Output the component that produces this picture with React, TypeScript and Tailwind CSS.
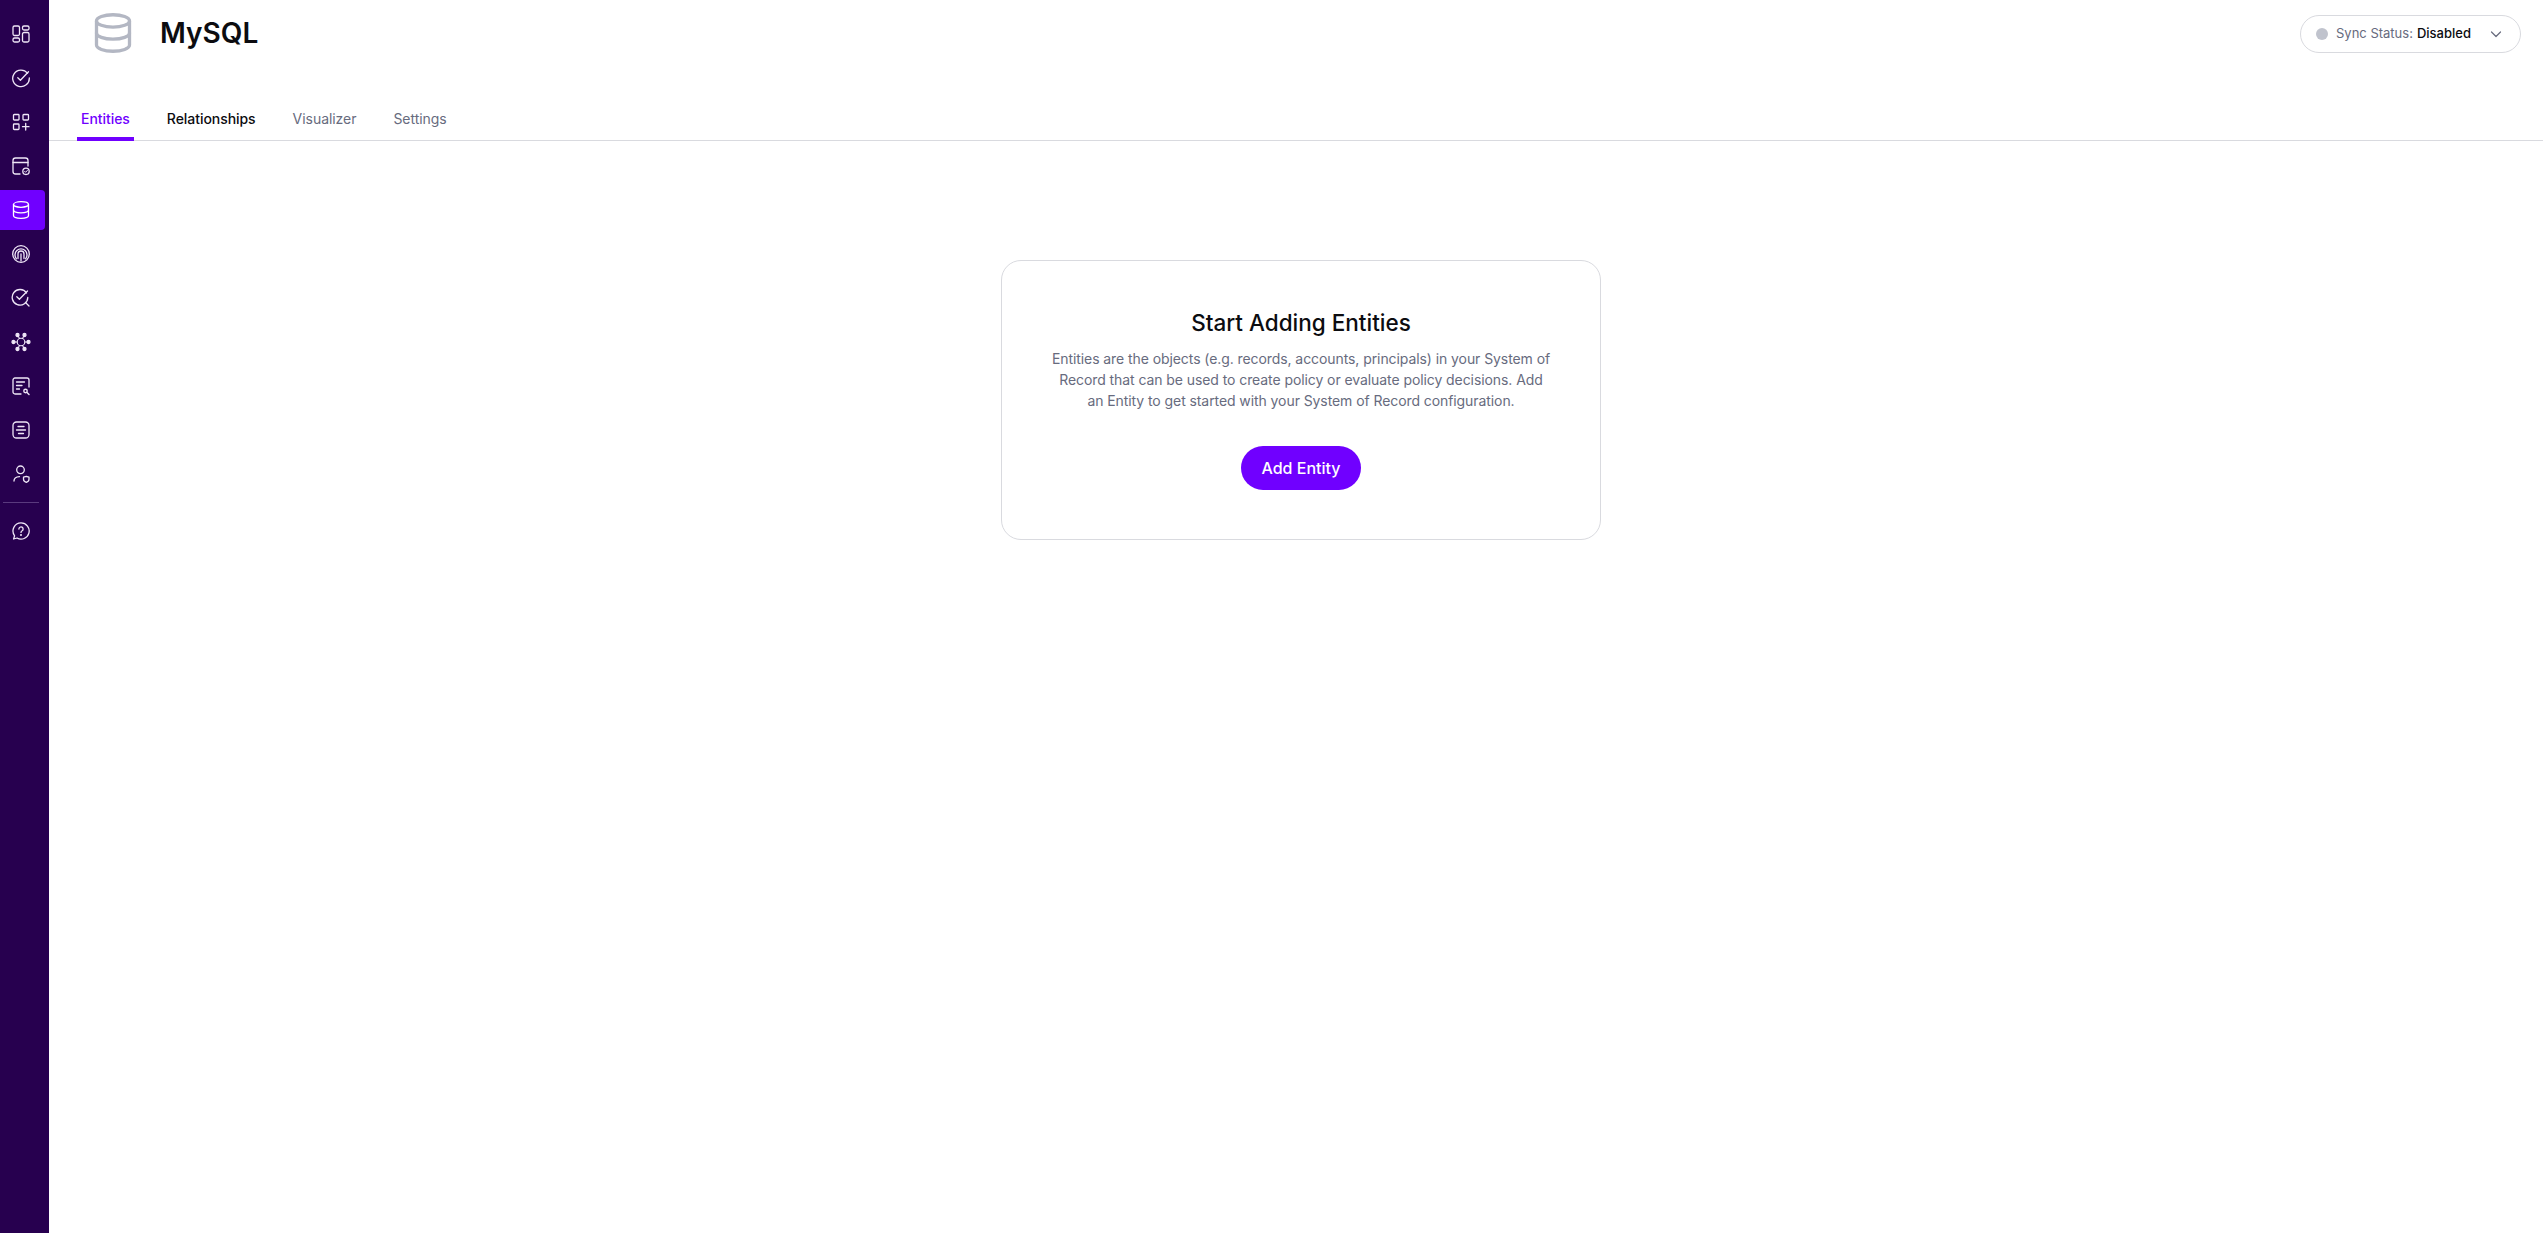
import React from 'react';

const iconProps = {
  width: 20,
  height: 20,
  viewBox: '0 0 20 20',
  fill: 'none',
  stroke: 'currentColor',
  strokeWidth: 1.3,
  strokeLinecap: 'round' as const,
  strokeLinejoin: 'round' as const,
};

const DashboardIcon = () => (
  <svg {...iconProps}>
    <rect x="2" y="2" width="6.5" height="9.500" rx="1.500" />
    <rect x="2" y="14" width="6.5" height="4" rx="1.500" />
    <rect x="11.5" y="2" width="6.5" height="4" rx="1.500" />
    <rect x="11.5" y="8.500" width="6.5" height="9.500" rx="1.500" />
  </svg>
);

const CheckCircleIcon = () => (
  <svg {...iconProps}>
    <path d="M16.500 5.200A8.300 8.300 0 1 0 18.300 10" />
    <path d="M6.800 9.800l2.600 2.500L17.500 3.800" />
  </svg>
);

const AddAppsIcon = () => (
  <svg {...iconProps}>
    <rect x="2.500" y="2.500" width="5.500" height="5.500" rx="0.800" />
    <rect x="12" y="2.500" width="5.500" height="5.500" rx="0.800" />
    <rect x="2.500" y="12" width="5.500" height="5.500" rx="0.800" />
    <path d="M14.700 11.500v6.500M11.500 14.700H18" />
  </svg>
);

const CalendarCheckIcon = () => (
  <svg {...iconProps}>
    <path d="M9 18H4.500A2.500 2.500 0 0 1 2 15.500V4.500A2.500 2.500 0 0 1 4.500 2h10A2.500 2.500 0 0 1 17 4.500V10" />
    <path d="M2 6.500h15" />
    <circle cx="15" cy="15.300" r="3.200" />
    <path d="M13.600 15.300l1 1 1.800-1.900" strokeWidth="1" />
  </svg>
);

const DatabaseIcon = ({ size = 20, width = 1.3 }: { size?: number; width?: number }) => (
  <svg {...iconProps} width={size} height={size} strokeWidth={width}>
    <ellipse cx="10" cy="4.500" rx="7.500" ry="2.800" />
    <path d="M2.500 4.500v11c0 1.550 3.350 2.800 7.500 2.800s7.500-1.250 7.500-2.800v-11" />
    <path d="M2.500 10c0 1.550 3.350 2.800 7.500 2.800s7.500-1.250 7.500-2.800" />
  </svg>
);

const FingerprintIcon = () => (
  <svg {...iconProps}>
    <circle cx="10" cy="10" r="8.300" />
    <path d="M5.400 14.800a6 6 0 1 1 9.200 0" />
    <path d="M7 14.500V10a3 3 0 0 1 6 0v4.500" />
    <path d="M10 10v7" />
  </svg>
);

const SearchCheckIcon = () => (
  <svg {...iconProps}>
    <path d="M15.500 5A7.800 7.800 0 1 0 16.800 9.500" />
    <path d="M5.800 8.800l2.600 2.500L16.500 3" />
    <path d="M14.500 14.500L18 18" />
  </svg>
);

const NetworkIcon = () => (
  <svg {...iconProps} strokeWidth={1.1}>
    <circle cx="10" cy="10" r="3.800" />
    <circle cx="6.500" cy="3" r="1.600" fill="currentColor" />
    <circle cx="13.500" cy="3" r="1.600" fill="currentColor" />
    <circle cx="2.500" cy="10" r="1.600" fill="currentColor" />
    <circle cx="17.500" cy="10" r="1.600" fill="currentColor" />
    <circle cx="6.500" cy="17" r="1.600" fill="currentColor" />
    <circle cx="13.500" cy="17" r="1.600" fill="currentColor" />
    <path d="M6.500 3l2 3.500M13.500 3l-2 3.500M2.500 10h3.700M17.500 10h-3.700M6.500 17l2-3.500M13.500 17l-2-3.500" />
  </svg>
);

const ReportSearchIcon = () => (
  <svg {...iconProps}>
    <path d="M10 18H4a2 2 0 0 1-2-2V4a2 2 0 0 1 2-2h12a2 2 0 0 1 2 2v7" />
    <path d="M5.500 6h8M5.500 9.500h5.500M5.500 13h3" />
    <circle cx="14.500" cy="15" r="1.700" strokeWidth="1.400" />
    <path d="M16 16.500l2 2" strokeWidth="1.400" />
  </svg>
);

const FilterBoxIcon = () => (
  <svg {...iconProps}>
    <rect x="2" y="2" width="16" height="16" rx="3.500" />
    <path d="M7 6.500h6M5.500 10h9M7.500 13.500h5" />
  </svg>
);

const UserShieldIcon = () => (
  <svg {...iconProps}>
    <circle cx="9.500" cy="5.800" r="3.800" />
    <path d="M3 17c0-2.600 2-4.200 5.500-4.400" />
    <path d="M12.500 13.200l2.800-.9 2.700.9v2c0 1.600-1.200 2.600-2.700 3.200-1.600-.6-2.800-1.600-2.800-3.200z" />
  </svg>
);

const HelpIcon = () => (
  <svg {...iconProps}>
    <path d="M10 1.900a8.100 8.100 0 1 1-4 15.100L2.600 18l1-3.200A8.100 8.100 0 0 1 10 1.900z" />
    <path d="M7.900 8a2.100 2.100 0 1 1 3.200 1.800c-.7.400-1.100.8-1.100 1.600" />
    <circle cx="10" cy="14" r="0.400" fill="currentColor" />
  </svg>
);

const navItems = [
  { icon: <DashboardIcon /> },
  { icon: <CheckCircleIcon /> },
  { icon: <AddAppsIcon /> },
  { icon: <CalendarCheckIcon /> },
  { icon: <DatabaseIcon />, active: true },
  { icon: <FingerprintIcon /> },
  { icon: <SearchCheckIcon /> },
  { icon: <NetworkIcon /> },
  { icon: <ReportSearchIcon /> },
  { icon: <FilterBoxIcon /> },
  { icon: <UserShieldIcon /> },
];

const Sidebar: React.FC = () => (
  <aside className="flex w-[49px] shrink-0 flex-col bg-[#27004f] pt-[12px] pr-1 text-[#efe6f7]">
    {navItems.map((item, index) => (
      <div key={index} className="flex h-[44px] items-center">
        <div
          className={`flex h-[40px] w-full items-center pl-[11px] ${item.active ? 'rounded-r-[4px] bg-[#7000ff] text-white' : ''}`}
        >
          {item.icon}
        </div>
      </div>
    ))}
    <div className="mt-[6px] ml-[3px] h-px w-[36px] bg-[#5a3a7e]" />
    <div className="mt-[6px] flex h-[44px] items-center pl-[11px]">
      <HelpIcon />
    </div>
  </aside>
);

const tabs = [
  { label: 'Entities', className: 'border-[#7000ff] font-medium text-[#7000ff]' },
  { label: 'Relationships', className: 'border-transparent font-medium text-[#0c0c10]' },
  { label: 'Visualizer', className: 'border-transparent text-[#676b7e]' },
  { label: 'Settings', className: 'border-transparent text-[#676b7e]' },
];

const Header: React.FC = () => (
  <header className="border-b border-[#d9dadf]">
    <div className="flex h-[66px] items-start justify-between pr-[22px]">
      <div className="mt-[11px] ml-[42px] flex items-center gap-[25px]">
        <span className="text-[#b3b7c3]">
          <DatabaseIcon size={44} width={1.5} />
        </span>
        <h1 className="text-[28px] leading-[40px] font-semibold text-[#0c0c10]">MySQL</h1>
      </div>
      <button className="mt-[15px] flex h-[38px] w-[221px] items-center rounded-full border border-[#d9dadf] pl-[15px] text-[13px]">
        <span className="h-3 w-3 rounded-full bg-[#c0c3cd]" />
        <span className="ml-[8px] text-[#676b7e]">Sync Status:</span>
        <span className="ml-1 font-medium text-[#0c0c10]">Disabled</span>
        <svg className="ml-[19px] text-[#676b7e]" width="12" height="12" viewBox="0 0 12 12" fill="none" stroke="currentColor" strokeWidth="1.200" strokeLinecap="round" strokeLinejoin="round">
          <path d="M1.500 4l4.500 4.500L10.500 4" />
        </svg>
      </button>
    </div>
    <nav className="flex h-[74px] items-end gap-[29px] pl-[28px]">
      {tabs.map((tab) => (
        <a key={tab.label} className={`mb-[-1px] border-b-4 px-1 pb-[8px] text-[14px] leading-[20px] tracking-[-0.05px] ${tab.className}`}>
          {tab.label}
        </a>
      ))}
    </nav>
  </header>
);

const EmptyCard: React.FC = () => (
  <div className="mt-[119px] ml-[952px] flex h-[280px] w-[600px] flex-col items-center rounded-[20px] border border-[#d9dadf] bg-white pt-[46px]">
    <h2 className="text-[22.5px] leading-[32px] font-medium text-[#0c0c10]">Start Adding Entities</h2>
    <p className="mt-[9px] w-[520px] text-center text-[14px] leading-[21px] tracking-[-0.08px] text-[#676b7e]">
      Entities are the objects (e.g. records, accounts, principals) in your System of
      <br />
      Record that can be used to create policy or evaluate policy decisions. Add
      <br />
      an Entity to get started with your System of Record configuration.
    </p>
    <button className="mt-[35px] flex h-[44px] w-[120px] items-center justify-center rounded-full bg-[#7000ff] text-[16px] font-medium text-white">
      Add Entity
    </button>
  </div>
);

const App: React.FC = () => (
  <div className="flex h-[1233px] w-full overflow-hidden bg-white font-['Inter',sans-serif]">
    <Sidebar />
    <main className="min-w-0 flex-1">
      <Header />
      <EmptyCard />
    </main>
  </div>
);

export default App;
